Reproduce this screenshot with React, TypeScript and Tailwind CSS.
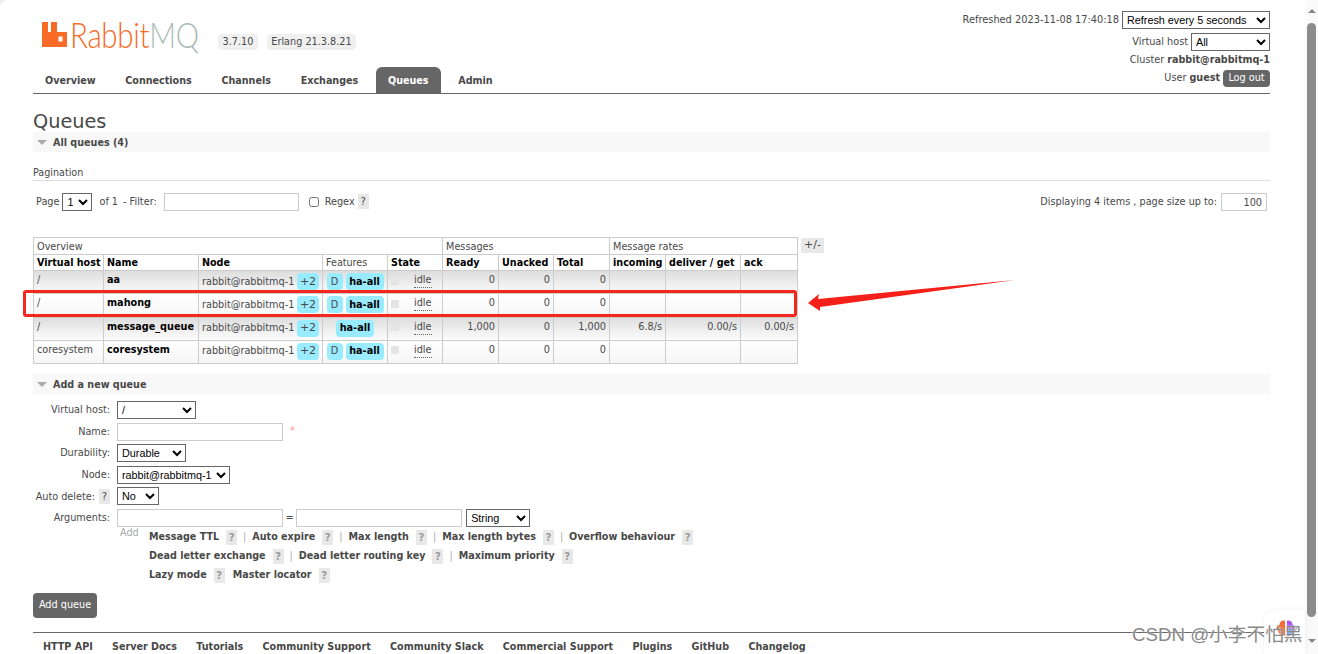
import type { ReactNode } from 'react'

const tabs = ['Overview', 'Connections', 'Channels', 'Exchanges', 'Queues', 'Admin']
const footerLinks = ['HTTP API', 'Server Docs', 'Tutorials', 'Community Support', 'Community Slack', 'Commercial Support', 'Plugins', 'GitHub', 'Changelog']

const queues = [
  { vhost: '/', name: 'aa', durable: true, ready: '0', unacked: '0', total: '0', incoming: '', deliver: '', ack: '' },
  { vhost: '/', name: 'mahong', durable: true, ready: '0', unacked: '0', total: '0', incoming: '', deliver: '', ack: '' },
  { vhost: '/', name: 'message_queue', durable: false, ready: '1,000', unacked: '0', total: '1,000', incoming: '6.8/s', deliver: '0.00/s', ack: '0.00/s' },
  { vhost: 'coresystem', name: 'coresystem', durable: true, ready: '0', unacked: '0', total: '0', incoming: '', deliver: '', ack: '' },
]

const argRows = [
  ['Message TTL', 'Auto expire', 'Max length', 'Max length bytes', 'Overflow behaviour'],
  ['Dead letter exchange', 'Dead letter routing key', 'Maximum priority'],
  ['Lazy mode', 'Master locator'],
]

const selectClass = 'border border-[#666] bg-white text-[10.8px] text-black h-[18px] [font-family:"Liberation_Sans",Arial,sans-serif]'
const inputClass = 'border border-[#ccc] bg-white h-[18px]'
const headCell = 'border border-[#ccc] px-[3px] text-left font-bold text-black text-[9.6px] h-[16px] leading-[14px] whitespace-nowrap'
const groupCell = 'border border-[#ccc] px-[3px] text-left font-normal h-[17px] leading-[15px]'
const bodyCell = 'border border-[#ccc] px-[3px] align-top pt-[2px] leading-[14px]'

function Help({ faint }: { faint?: boolean }) {
  return (
    <span className={`inline-flex h-[15px] w-[11px] items-center justify-center bg-[#e8e8e8] text-[10px] ${faint ? 'text-[#999]' : 'text-[#484848]'}`}>?</span>
  )
}

function Pill({ children, className = '' }: { children: ReactNode; className?: string }) {
  return <span className={`inline-flex h-[17px] items-center justify-center rounded-[4px] bg-[#99ebff] ${className}`}>{children}</span>
}

function SectionBar({ title }: { title: string }) {
  return (
    <div className="flex h-[20px] items-center gap-[6px] bg-[#f8f8f8] pl-[4px] text-[9.6px] font-bold text-[#484848]">
      <span className="h-0 w-0 border-x-[5px] border-t-[5px] border-x-transparent border-t-[#aaa]" />
      <span className="pt-[2px]">{title}</span>
    </div>
  )
}

function FormRow({ label, children, help }: { label: string; children: ReactNode; help?: boolean }) {
  return (
    <div className="flex h-[21.6px] items-center gap-[7px]">
      <div className="flex w-[77px] items-center justify-end gap-[4px] whitespace-nowrap pt-[1px]">
        {label}
        {help && <Help />}
      </div>
      {children}
    </div>
  )
}

function Logo() {
  return (
    <div className="flex w-[158px] items-start">
      <svg viewBox="0 0 25 25" className="mt-[22px] h-[25px] w-[25px] shrink-0">
        <path fillRule="evenodd" fill="#f76b26" d="M0 0h6v10h3V0h6v10h10v15H0zM16.5 14.5v5h4v-5z" />
      </svg>
      <span className="ml-[3px] mt-[13px] origin-left scale-x-[0.82] whitespace-nowrap text-[36px] font-light leading-[42px] tracking-[-0.4px] text-[#f76b26] [font-family:Lato,sans-serif]">
        Rabbit<span className="text-[#aabbb5]">MQ</span>
      </span>
    </div>
  )
}

export default function App() {
  return (
    <div className="bg-[#eee]">
      <div className='relative h-[654px] w-[1318px] overflow-hidden rounded-tl-[8px] bg-white text-[9.7px] text-[#484848] [font-family:"DejaVu_Sans",Verdana,sans-serif]'>
        <div className="w-[1270px] pl-[33px]">
          {/* Header */}
          <div className="flex h-[94px] justify-between border-b border-[#666]">
            <div className="pl-[9px]">
              <div className="flex h-[67px] items-start">
                <Logo />
                <span className="ml-[18px] mt-[34px] flex h-[16px] w-[40px] items-center justify-center rounded-[4px] bg-[#f0f0f0]">3.7.10</span>
                <span className="ml-[9px] mt-[34px] flex h-[16px] w-[89px] items-center justify-center rounded-[4px] bg-[#f0f0f0] whitespace-nowrap">Erlang 21.3.8.21</span>
              </div>
              <div className="ml-[-9px] flex h-[26px] items-stretch gap-[5.7px] text-[9.6px] font-bold">
                {tabs.map((t) => (
                  <div
                    key={t}
                    className={t === 'Queues' ? 'flex items-center rounded-t-[6px] bg-[#666] px-[12px] pt-[2px] text-white' : 'flex items-center px-[12px] pt-[2px]'}
                  >
                    {t}
                  </div>
                ))}
              </div>
            </div>
            <div className="flex flex-col items-end">
              <div className="mt-[11px] flex h-[18px] items-center gap-[3px] text-[9.8px]">
                Refreshed 2023-11-08 17:40:18
                <select className={`${selectClass} w-[148px]`} defaultValue="5">
                  <option value="5">Refresh every 5 seconds</option>
                </select>
              </div>
              <div className="mt-[4px] flex h-[18px] items-center gap-[3px]">
                <span className="pt-[1px]">Virtual host</span>
                <select className={`${selectClass} w-[79px]`}>
                  <option>All</option>
                </select>
              </div>
              <div className="flex h-[18px] items-center whitespace-pre pt-[1px]">
                <span>Cluster <b className="text-[9.6px]">rabbit@rabbitmq-1</b></span>
              </div>
              <div className="flex h-[18px] items-center gap-[3px] whitespace-pre">
                <span className="pt-[1px]">User <b className="text-[9.6px]">guest</b></span>
                <span className="flex h-[17px] w-[47px] items-center justify-center rounded-[4px] bg-[#666] pt-[1px] text-white">Log out</span>
              </div>
            </div>
          </div>

          <h1 className="mt-[17px] h-[21px] text-[19.3px] leading-[22px]">Queues</h1>

          <SectionBar title="All queues (4)" />

          <div className="mt-[14px] h-[15px] border-b border-[#ddd] pt-[1px] text-[9.6px] leading-[12px]">Pagination</div>

          {/* Pagination row */}
          <div className="mt-[11px] flex h-[20px] items-center justify-between">
            <div className="flex items-center pl-[3px]">
              Page
              <select className={`${selectClass} ml-[3px] w-[30px]`}>
                <option>1</option>
              </select>
              <span className="ml-[7px]">of 1</span>
              <span className="ml-[5px]">- Filter:</span>
              <input className={`${inputClass} ml-[7px] w-[135px]`} />
              <input type="checkbox" className="ml-[10px] h-[10px] w-[10px]" />
              <span className="ml-[6px] pt-[1px]">Regex</span>
              <span className="ml-[3px]"><Help /></span>
            </div>
            <div className="flex items-center gap-[4px] pr-[3px]">
              <span className="pt-[1px]">Displaying 4 items , page size up to:</span>
              <input className={`${inputClass} w-[46px] px-[4px] text-right`} defaultValue="100" />
            </div>
          </div>

          {/* Queue table */}
          <div className="mt-[25px] flex items-start gap-[3px]">
            <table className="w-[764px] table-fixed border-collapse border border-[#ccc]">
              <colgroup>
                {[70, 95, 124, 65, 55, 56, 55, 56, 56, 75, 57].map((w, i) => (
                  <col key={i} style={{ width: w }} />
                ))}
              </colgroup>
              <thead>
                <tr>
                  <th colSpan={5} className={groupCell}>Overview</th>
                  <th colSpan={3} className={groupCell}>Messages</th>
                  <th colSpan={3} className={groupCell}>Message rates</th>
                </tr>
                <tr>
                  <th className={headCell}>Virtual host</th>
                  <th className={headCell}>Name</th>
                  <th className={headCell}>Node</th>
                  <th className={`${headCell} !font-normal !text-[#484848]`}>Features</th>
                  <th className={headCell}>State</th>
                  <th className={headCell}>Ready</th>
                  <th className={headCell}>Unacked</th>
                  <th className={headCell}>Total</th>
                  <th className={headCell}>incoming</th>
                  <th className={headCell}>deliver / get</th>
                  <th className={headCell}>ack</th>
                </tr>
              </thead>
              <tbody>
                {queues.map((q, i) => (
                  <tr key={q.name} className={`h-[23.3px] bg-linear-to-b ${i % 2 === 0 ? 'from-[#ddd] to-[#fcfcfc]' : 'from-white to-[#f6f6f6]'}`}>
                    <td className={bodyCell}>{q.vhost}</td>
                    <td className={`${bodyCell} text-[9.7px] font-bold text-black`}>{q.name}</td>
                    <td className={`${bodyCell} whitespace-nowrap`}>
                      <span className="flex items-center justify-between">rabbit@rabbitmq-1 <Pill className="w-[22px] text-[11px]">+2</Pill></span>
                    </td>
                    <td className={bodyCell}>
                      <span className="flex items-center justify-center gap-[3px]">
                        {q.durable && <Pill className="w-[16px]">D</Pill>}
                        <Pill className="w-[38px] font-bold text-black">ha-all</Pill>
                      </span>
                    </td>
                    <td className={bodyCell}>
                      <span className="flex items-center gap-[15px]">
                        <span className="h-[8px] w-[8px] bg-[#e4e4e4]" />
                        <span className="border-b border-dotted border-[#666]">idle</span>
                      </span>
                    </td>
                    {[q.ready, q.unacked, q.total, q.incoming, q.deliver, q.ack].map((v, j) => (
                      <td key={j} className={`${bodyCell} text-right`}>{v}</td>
                    ))}
                  </tr>
                ))}
              </tbody>
            </table>
            <span className="mt-[1px] flex h-[15px] w-[23px] items-center justify-center bg-[#e8e8e8] text-[11px]">+/-</span>
          </div>

          <div className="mt-[10px]">
            <SectionBar title="Add a new queue" />
          </div>

          {/* Add queue form */}
          <div className="mt-[5px]">
            <FormRow label="Virtual host:">
              <select className={`${selectClass} w-[79px]`}><option>/</option></select>
            </FormRow>
            <FormRow label="Name:">
              <input className={`${inputClass} w-[166px]`} />
              <span className="text-[#f99]">*</span>
            </FormRow>
            <FormRow label="Durability:">
              <select className={`${selectClass} w-[69px]`}><option>Durable</option></select>
            </FormRow>
            <FormRow label="Node:">
              <select className={`${selectClass} w-[113px]`}><option>rabbit@rabbitmq-1</option></select>
            </FormRow>
            <FormRow label="Auto delete:" help>
              <select className={`${selectClass} w-[42px]`}><option>No</option></select>
            </FormRow>
            <FormRow label="Arguments:">
              <div className="flex items-center">
                <input className={`${inputClass} w-[166px]`} />
                <span className="mx-[2.5px]">=</span>
                <input className={`${inputClass} w-[166px]`} />
                <select className={`${selectClass} ml-[4px] w-[64px]`}><option>String</option></select>
              </div>
            </FormRow>
            <div className="flex pl-[87px]">
              <span className="-mt-[3px] w-[29px] text-[#aaa]">Add</span>
              <div className="-mt-[1px] text-[9.6px]">
                {argRows.map((row) => (
                  <div key={row[0]} className="flex h-[19px] items-center font-bold">
                    {row.map((label, i) => (
                      <span key={label} className="flex items-center">
                        {label}
                        <span className="ml-[7px]"><Help faint /></span>
                        {i < row.length - 1 && row[0] !== 'Lazy mode' && <span className="mx-[6px] font-normal text-[#aaa]">|</span>}
                        {row[0] === 'Lazy mode' && i === 0 && <span className="w-[8px]" />}
                      </span>
                    ))}
                  </div>
                ))}
              </div>
            </div>
          </div>

          <button className="mt-[8px] flex h-[25px] w-[64px] items-center justify-center rounded-[4px] bg-[#666] text-white">Add queue</button>

          {/* Footer */}
          <div className="mt-[14px] flex gap-[19.3px] border-t border-[#666] pl-[10px] pt-[7px] text-[9.6px] font-bold leading-[14px]">
            {footerLinks.map((l) => (
              <span key={l} className="whitespace-nowrap">{l}</span>
            ))}
          </div>
        </div>

        {/* Scrollbar */}
        <div className="absolute bottom-0 right-0 top-0 flex w-[13px] flex-col items-center bg-[#fafafa]">
          <span className="mt-[9px] h-0 w-0 border-x-[4px] border-b-[4px] border-x-transparent border-b-[#888]" />
          <span className="mt-[10px] h-[594px] w-[9px] rounded-[5px] bg-[#8c8c8c]" />
          <span className="mt-[22px] h-0 w-0 border-x-[4px] border-t-[4px] border-x-transparent border-t-[#888]" />
        </div>

        {/* Annotation drawn over the screenshot */}
        <div className="absolute left-[23px] top-[290px] h-[27px] w-[774px] rounded-[3px] border-[3px] border-[#f5261e]" />
        <svg className="absolute left-[800px] top-[270px] h-[50px] w-[225px]" viewBox="0 0 225 50">
          <path fill="#f5201a" d="M8 33 L19 24 L18 29 L215 10 L20 37 L20 41 Z" />
        </svg>

        {/* Floating widget and watermark */}
        <div className="absolute bottom-0 right-[13px] flex h-[44px] w-[41px] items-center justify-center rounded-tl-[14px] bg-white/90 shadow-[0_0_6px_rgba(0,0,0,0.06)]">
          <svg viewBox="0 0 24 24" className="mb-[6px] ml-[2px] h-[22px] w-[22px]">
            <path fill="#f0703a" d="M11 3C8 2 5 4 5 7c-3 1-4 6-1 8 0 3 4 5 7 4z" />
            <path fill="#a855f7" d="M13 3c3-1 6 1 6 4 3 1 4 6 1 8 0 3-4 5-7 4z" />
            <path fill="#3b82f6" d="M13 12h7v3c0 3-4 5-7 4z" />
          </svg>
        </div>
        <div className='absolute left-[1132px] top-[624px] whitespace-nowrap text-[18.7px] leading-[22px] text-[#888] [font-family:"Liberation_Sans","Noto_Sans_CJK_SC",sans-serif] [text-shadow:0_0_2px_#fff]'>
          CSDN @小李不怕黑
        </div>
      </div>
    </div>
  )
}
